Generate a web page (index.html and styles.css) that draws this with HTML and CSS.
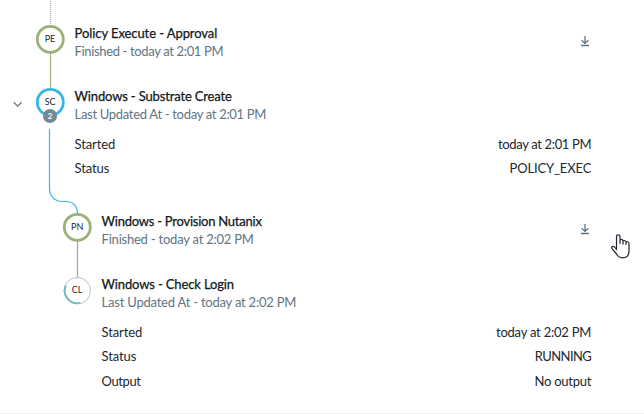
FILE: index.html
```html
<!DOCTYPE html>
<html lang="en">
<head>
<meta charset="utf-8">
<title>Task timeline</title>
<link rel="stylesheet" href="styles.css">
</head>
<body>
<main class="timeline">
  <section class="task first">
    <svg class="rail" width="75" height="79" viewBox="0 0 75 79">
      <path class="dotted" d="M50.5 1V25"/>
      <path class="line green" d="M50.5 53V79"/>
      <circle class="ring green" cx="50.3" cy="39.3" r="13"/>
      <text class="initials" x="50" y="42.3">PE</text>
    </svg>
    <div class="content">
      <h2><span class="t1">Policy Execute - Approval</span></h2>
      <p><span class="s1">Finished - today at 2:01 PM</span></p>
    </div>
    <svg class="download" width="10" height="11" viewBox="0 0 10 11"><path d="M5 0V7M1.7 4.2 5 7.4 8.3 4.2M1 9.5H9"/></svg>
  </section>
  <section class="task second">
    <svg class="rail" width="75" height="126" viewBox="0 0 75 126">
      <path class="line green" d="M50.5 0V10"/>
      <path class="chevron" d="M13.7 23.2 17.7 27.2 21.7 23.2"/>
      <circle class="ring blue" cx="50.3" cy="23.3" r="13"/>
      <text class="initials" x="50.2" y="26.3">SC</text>
      <circle class="badge" cx="50" cy="37" r="7"/>
      <text class="count" x="50" y="39.7">2</text>
      <path class="line blue" d="M49.5 50V110C49.5 117 55 122.5 62 122.5H65C71 122.5 74.5 125 76 128"/>
    </svg>
    <div class="content">
      <h2><span class="t2">Windows - Substrate Create</span></h2>
      <p><span class="s2">Last Updated At - today at 2:01 PM</span></p>
      <dl>
        <div><dt>Started</dt><dd class="s1">today at 2:01 PM</dd></div>
        <div><dt>Status</dt><dd class="policy">POLICY_EXEC</dd></div>
      </dl>
    </div>
  </section>
  <section class="task nested third">
    <svg class="rail" width="102" height="63" viewBox="0 0 102 63">
      <path class="line blue" d="M76 2Q77.4 4.5 77.5 9"/>
      <path class="line green" d="M77.5 36V63"/>
      <circle class="ring green" cx="77.3" cy="22.3" r="13"/>
      <text class="initials" x="77.2" y="25.3">PN</text>
    </svg>
    <div class="content">
      <h2><span class="t3">Windows - Provision Nutanix</span></h2>
      <p><span class="s3">Finished - today at 2:02 PM</span></p>
    </div>
    <svg class="download" width="10" height="11" viewBox="0 0 10 11"><path d="M5 0V7M1.7 4.2 5 7.4 8.3 4.2M1 9.5H9"/></svg>
  </section>
  <section class="task nested fourth">
    <svg class="rail" width="102" height="145" viewBox="0 0 102 145">
      <path class="line green" d="M77.5 0V9"/>
      <circle class="track" cx="77.3" cy="22.7" r="13.2"/>
      <path class="progress" d="M65.9 17.4A12.6 12.6 0 0 0 80.3 34.9"/>
      <text class="initials" x="77" y="25.3">CL</text>
    </svg>
    <div class="content">
      <h2><span class="t4">Windows - Check Login</span></h2>
      <p><span class="s4">Last Updated At - today at 2:02 PM</span></p>
      <dl>
        <div><dt>Started</dt><dd class="s3">today at 2:02 PM</dd></div>
        <div><dt>Status</dt><dd class="running">RUNNING</dd></div>
        <div><dt class="output">Output</dt><dd class="none">No output</dd></div>
      </dl>
    </div>
  </section>
  <svg class="pointer" width="19" height="25" viewBox="0 0 19 25"><path d="M5.5 15.5V2.5C5.5.3 9 .3 9 2.5V9.5V6.5C9 5 12 5 12 7V10V7.5C12 6 15 6.2 15 8V10.5V8.7C15 7.3 18 7.3 18 9.3V17C18 21.5 15.5 23.8 11.5 23.8C8.5 23.8 7 22.7 5.5 20L1 14.7C-.2 13 2 11.4 3.5 13Z"/></svg>
</main>
</body>
</html>
```
FILE: styles.css
```css
* { box-sizing: border-box; }
body { margin: 0; background: #fff; color: #22272e; font: 13px/18px Lato, sans-serif; }
.timeline { position: relative; width: 644px; height: 414px; border-bottom: 1px solid #f0f1f2; overflow: hidden; }
.task { display: grid; grid-template-columns: 74.6px 1fr 10px; padding-right: 54px; height: 63px; }
.nested { grid-template-columns: 101.6px 1fr 10px; }
.first { height: 79px; }
.second { height: 126px; }
.fourth { height: 145px; }
.rail { display: block; overflow: visible; }
.content { padding-top: 8px; white-space: nowrap; }
.first .content { padding-top: 24px; }
.nested .content { padding-top: 7px; }
.second .content, .fourth .content { grid-column: 2 / 4; margin-right: -1.2px; }
h2 { margin: 0; font-size: 13px; line-height: 18px; font-weight: 400; color: #111820; -webkit-text-stroke: .25px #111820; }
p { margin: 0; line-height: 19px; color: #627482; }
dl { margin: 8px 0 0; }
dl div { display: flex; justify-content: space-between; height: 24.3px; line-height: 24px; }
dt { letter-spacing: -.12px; }
dd { margin: 0; }
.t1 { letter-spacing: -.08px; }
.t2 { letter-spacing: -.15px; }
.t3 { letter-spacing: -.24px; }
.t4 { letter-spacing: -.14px; }
.s1 { letter-spacing: -.35px; }
.s2 { letter-spacing: -.31px; }
.s3 { letter-spacing: -.22px; }
.s4 { letter-spacing: -.22px; }
.policy { letter-spacing: -.15px; }
.running { letter-spacing: -.6px; }
.none { letter-spacing: -.25px; }
.output { letter-spacing: -.4px; }
.download { margin-top: 36px; }
.third .download { margin-top: 19px; }
.download path { fill: none; stroke: #627482; stroke-width: 1.3; }
.line { fill: none; stroke-width: 1.2; }
.green { stroke: #9cb177; }
.blue { stroke: #36b5e9; }
.dotted { stroke: #a5afb8; stroke-width: 1; stroke-dasharray: 1 1; }
.ring { fill: #fff; stroke-width: 2.8; }
.track { fill: #fff; stroke: #b8bfca; stroke-width: 1; }
.progress { fill: none; stroke: #72beb8; stroke-width: 2; }
.chevron { fill: none; stroke: #697783; stroke-width: 1.3; }
.badge { fill: #748798; }
.initials { font: 9px Lato, sans-serif; fill: #22272e; text-anchor: middle; }
.count { font: bold 8px Lato, sans-serif; fill: #fff; text-anchor: middle; }
.pointer { position: absolute; left: 611px; top: 233.5px; }
.pointer path { fill: #fff; stroke: #222233; stroke-width: 1.2; stroke-linejoin: round; }
```
